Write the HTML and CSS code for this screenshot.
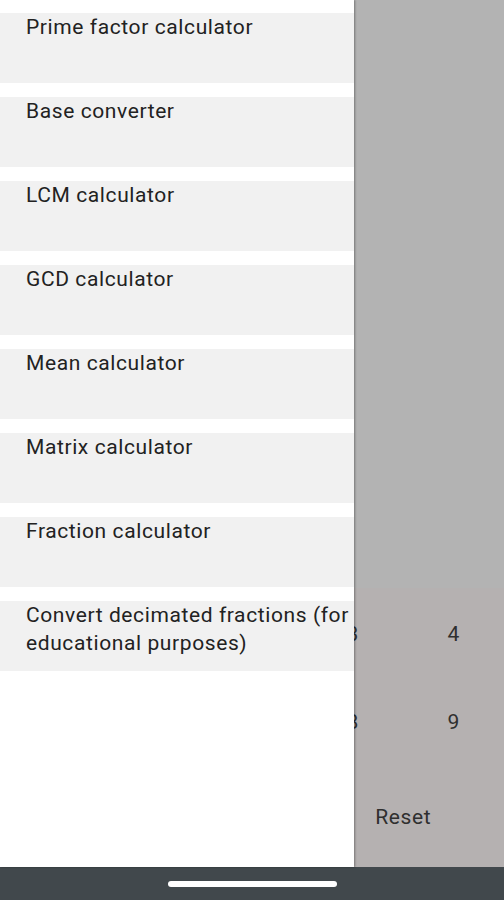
FILE: index.html
```html
<!DOCTYPE html>
<html lang="en">
<head>
    <meta charset="UTF-8">
    <meta name="viewport" content="width=device-width, initial-scale=1.0">
    <title>Calculators</title>
    <link rel="stylesheet" href="styles.css">
</head>
<body>

<div class="screen">
    <div class="app">
        <div class="app-top"></div>
        <div class="keypad">
            <span class="key"></span>
            <span class="key"></span>
            <span class="key"></span>
            <span class="key">3</span>
            <span class="key">4</span>
            <span class="key"></span>
            <span class="key"></span>
            <span class="key"></span>
            <span class="key">8</span>
            <span class="key">9</span>
            <span class="key"></span>
            <span class="key"></span>
            <span class="key"></span>
            <span class="key reset">Reset</span>
        </div>

        <nav class="drawer">
            <a class="drawer-item">Prime factor calculator</a>
            <a class="drawer-item">Base converter</a>
            <a class="drawer-item">LCM calculator</a>
            <a class="drawer-item">GCD calculator</a>
            <a class="drawer-item">Mean calculator</a>
            <a class="drawer-item">Matrix calculator</a>
            <a class="drawer-item">Fraction calculator</a>
            <a class="drawer-item">Convert decimated fractions (for educational purposes)</a>
        </nav>
    </div>
    <div class="nav-bar">
        <div class="handle"></div>
    </div>
</div>

</body>
</html>
```

FILE: styles.css
```css
body {
    margin: 0;
    font-family: Roboto, "Noto Sans", Arial, sans-serif;
}

.screen {
    width: 504px;
    height: 900px;
    display: flex;
    flex-direction: column;
    overflow: hidden;
}

.app {
    position: relative;
    flex: 1;
    display: flex;
    flex-direction: column;
    background: #b3b3b3;
}

.app-top {
    height: 588px;
    background: #b3b3b3;
}

.keypad {
    flex: 1;
    background: #b5b1b1;
    padding-top: 2px;
    display: grid;
    grid-template-columns: repeat(5, 1fr);
    grid-template-rows: 88px 88px 1fr;
    color: #2f2f2f;
    font-size: 21px;
    letter-spacing: 0.6px;
}

.key {
    display: flex;
    align-items: center;
    justify-content: center;
}

.keypad .reset {
    grid-column: span 2;
}

.drawer {
    position: absolute;
    top: 0;
    left: 0;
    bottom: 0;
    width: 354px;
    background: #fff;
    box-shadow: 1px 0 2px rgba(0, 0, 0, 0.35);
    padding-top: 13px;
    box-sizing: border-box;
    display: flex;
    flex-direction: column;
    gap: 14px;
}

.drawer-item {
    height: 70px;
    box-sizing: border-box;
    padding: 0 0 0 26px;
    background: #f1f1f1;
    color: #222;
    font-size: 21px;
    line-height: 28px;
    letter-spacing: 0.6px;
}

.nav-bar {
    height: 33px;
    background: #41484c;
    display: flex;
    justify-content: center;
    padding-top: 14px;
    box-sizing: border-box;
}

.handle {
    width: 169px;
    height: 6px;
    border-radius: 3px;
    background: #fff;
}
```
